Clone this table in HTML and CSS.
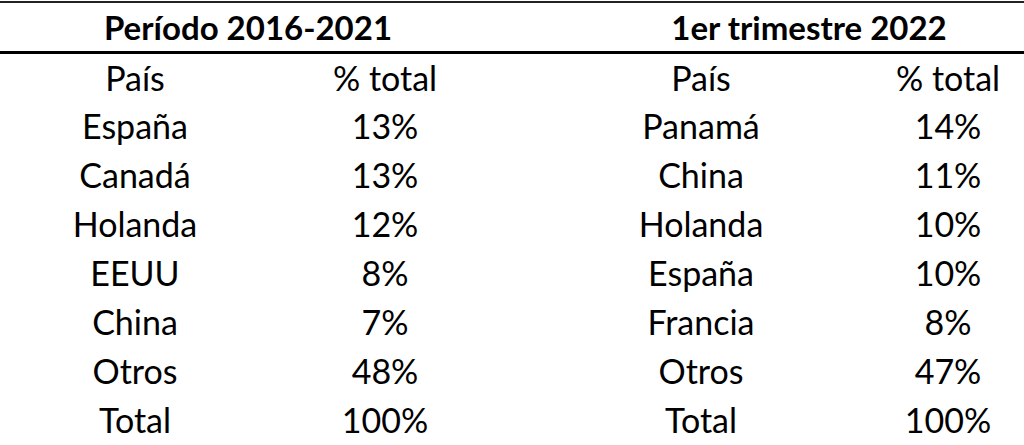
FILE: index.html
```html
<!DOCTYPE html>
<html lang="es">
<head>
  <meta charset="UTF-8">
  <meta name="viewport" content="width=device-width, initial-scale=1.0">
  <title>Destinos por país</title>
  <link rel="stylesheet" href="styles.css">
</head>
<body>
  <table class="share-table">
    <colgroup>
      <col class="col-a">
      <col class="col-b">
      <col class="col-gap">
      <col class="col-c">
      <col class="col-d">
    </colgroup>
    <thead>
      <tr class="period-row">
        <th colspan="2" class="period-left">Período 2016-2021</th>
        <th class="gap"></th>
        <th colspan="2" class="period-right">1er trimestre 2022</th>
      </tr>
    </thead>
    <tbody>
      <tr>
        <td class="first">País</td><td>% total</td><td class="gap"></td><td>País</td><td class="last">% total</td>
      </tr>
      <tr>
        <td class="first">España</td><td>13%</td><td class="gap"></td><td>Panamá</td><td class="last">14%</td>
      </tr>
      <tr>
        <td class="first">Canadá</td><td>13%</td><td class="gap"></td><td>China</td><td class="last">11%</td>
      </tr>
      <tr>
        <td class="first">Holanda</td><td>12%</td><td class="gap"></td><td>Holanda</td><td class="last">10%</td>
      </tr>
      <tr>
        <td class="first">EEUU</td><td>8%</td><td class="gap"></td><td>España</td><td class="last">10%</td>
      </tr>
      <tr>
        <td class="first">China</td><td>7%</td><td class="gap"></td><td>Francia</td><td class="last">8%</td>
      </tr>
      <tr>
        <td class="first">Otros</td><td>48%</td><td class="gap"></td><td>Otros</td><td class="last">47%</td>
      </tr>
      <tr>
        <td class="first">Total</td><td>100%</td><td class="gap"></td><td>Total</td><td class="last">100%</td>
      </tr>
    </tbody>
  </table>
</body>
</html>
```

FILE: styles.css
```css
* {
  margin: 0;
  padding: 0;
  box-sizing: border-box;
}

body {
  font-family: Lato, "Open Sans", sans-serif;
  background-color: #fff;
  color: #000;
  padding-top: 1px;
  overflow: hidden;
}

.share-table {
  width: 1024px;
  border-collapse: collapse;
  table-layout: fixed;
}

.col-a { width: 260px; }
.col-b { width: 250px; }
.col-gap { width: 68px; }
.col-c { width: 246px; }
.col-d { width: 200px; }

.period-row th {
  height: 50px;
  font-size: 33px;
  font-weight: bold;
  text-align: center;
  border-top: 2px solid #222;
  border-bottom: 3px solid #000;
  vertical-align: middle;
}

.period-left {
  padding: 0 24px 0 10px;
}

.period-right {
  padding-left: 16px;
}

tbody td {
  height: 49px;
  font-size: 34px;
  text-align: center;
  vertical-align: middle;
}

tbody td.first {
  padding-left: 10px;
}

tbody td.last {
  padding-left: 48px;
}
```
